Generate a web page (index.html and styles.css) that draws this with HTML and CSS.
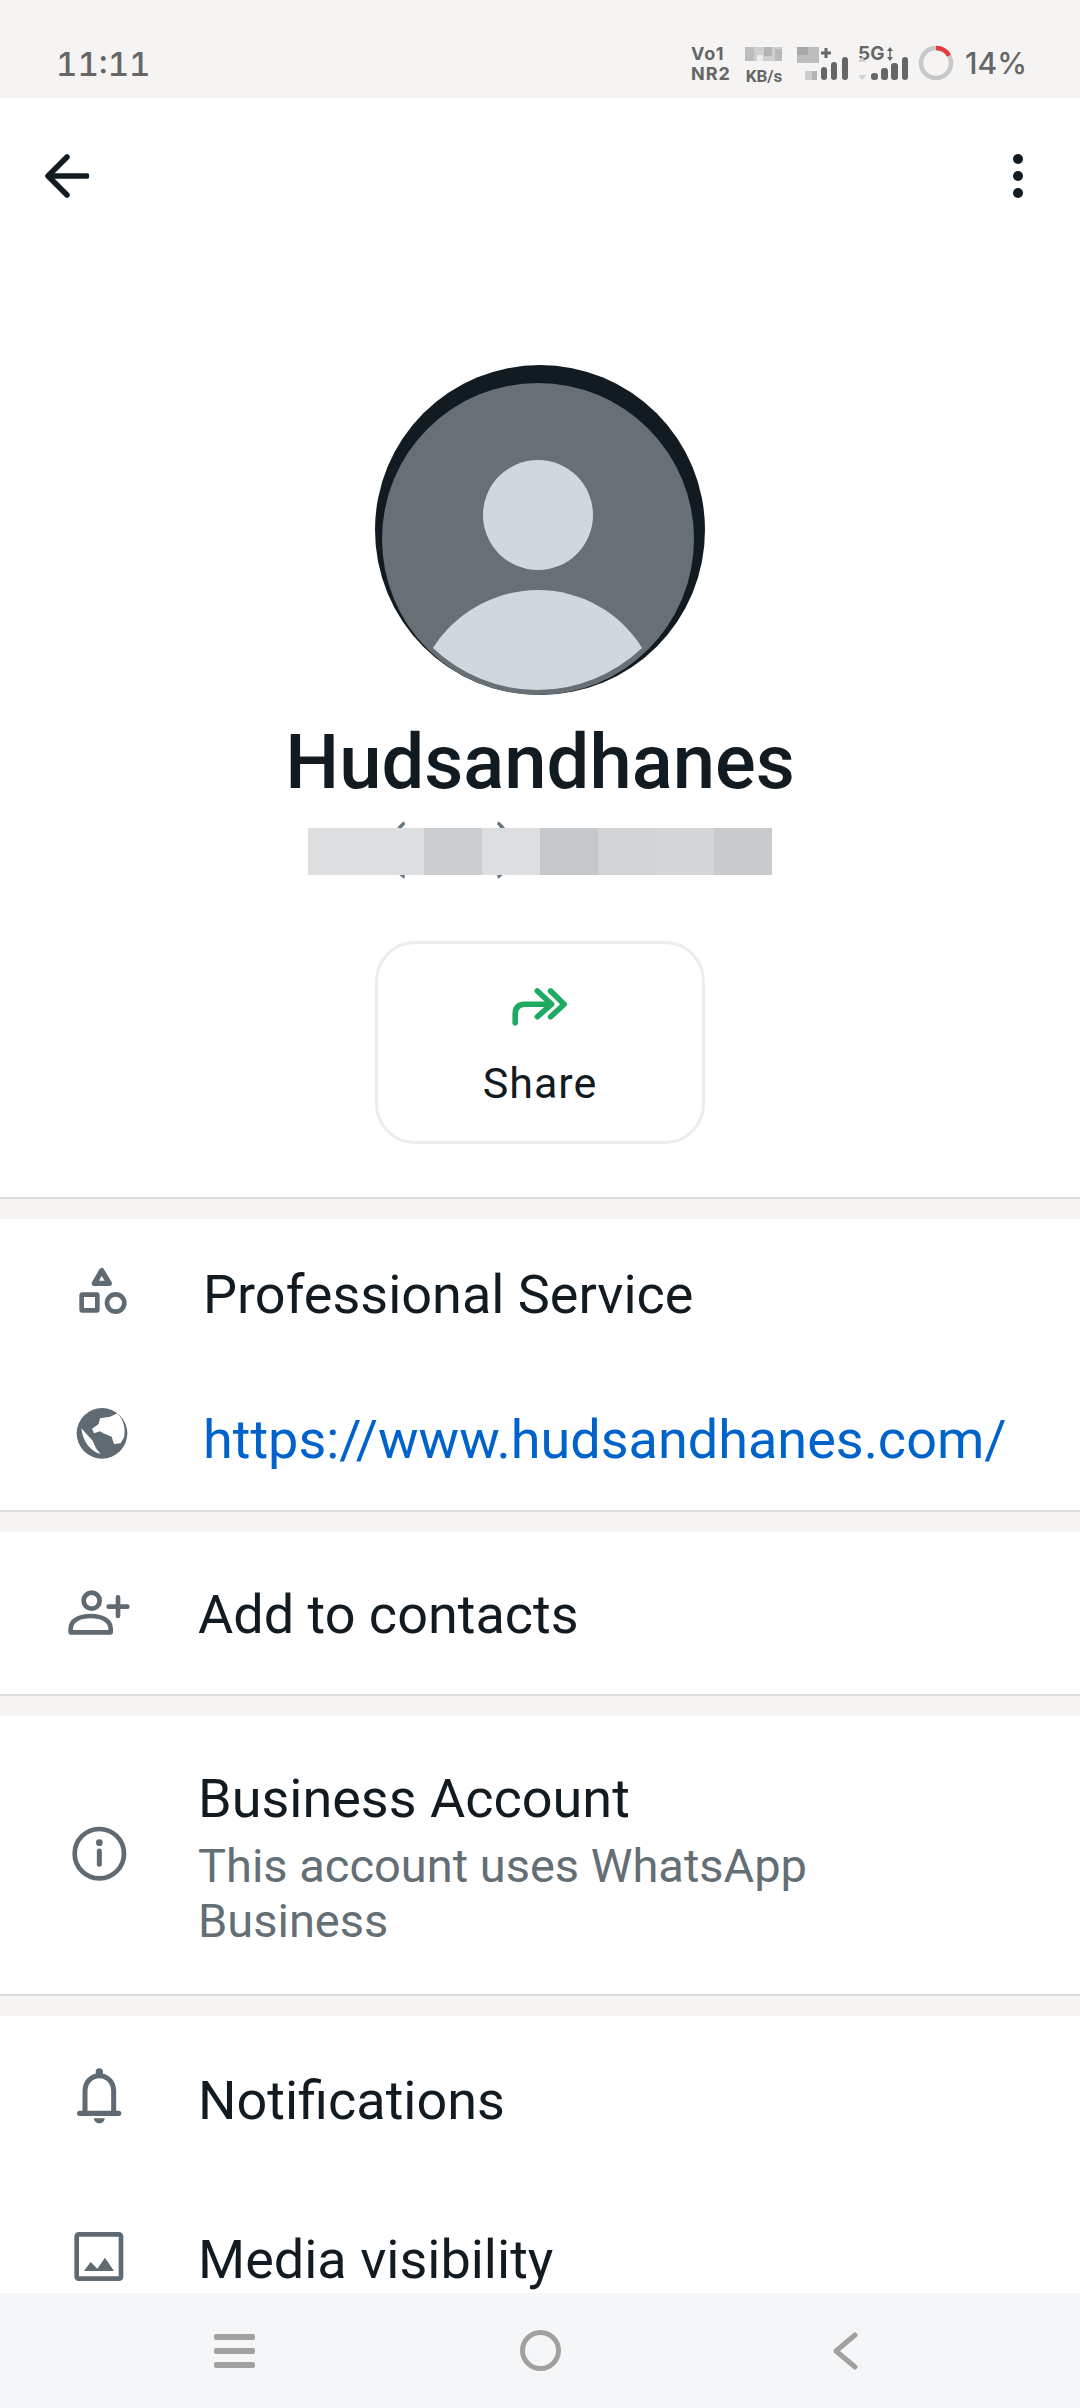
FILE: index.html
```html
<!DOCTYPE html>
<html>
<head>
    <meta charset="UTF-8">
    <link rel="stylesheet" href="styles.css">
</head>
<body>
    <div class="phone">
        <div class="statusbar">
            <div class="clock">11:11</div>
            <div class="status-icons">
                <div class="net-type"><div>Vo1</div><div>NR2</div></div>
                <div class="net-speed">
                    <svg class="speed-blur" viewBox="0 0 37 14">
                        <rect width="37" height="14" fill="#cfcfcf"/>
                        <rect x="0" width="9" height="14" fill="#bdbdbd"/>
                        <rect x="12" y="8" width="6" height="6" fill="#eeeeee"/>
                        <rect x="19" width="8" height="9" fill="#b4b4b4"/>
                        <rect x="30" y="2" width="7" height="12" fill="#b9b9b9"/>
                    </svg>
                    <div>KB/s</div>
                </div>
                <svg class="signal sim1" viewBox="0 0 52 34">
                    <rect x="0" width="22" height="16" fill="#bdbdbd"/>
                    <rect x="0" width="11" height="8" fill="#a8a8a8"/>
                    <path d="M24 6h10M29 1v10" stroke="#666" stroke-width="3"/>
                    <rect x="8" y="24" width="7" height="9" fill="#cdcdcd"/>
                    <rect x="15" y="24" width="5" height="9" fill="#b5b5b5"/>
                    <rect x="24" y="20" width="6" height="13" rx="3" fill="#666"/>
                    <rect x="34" y="15" width="6" height="18" rx="3" fill="#666"/>
                    <rect x="45" y="10" width="6" height="23" rx="3" fill="#666"/>
                </svg>
                <div class="sim2">
                    <div class="sim2-label">5G<svg class="updown" viewBox="0 0 8 14"><path d="M4 0l3 4H1zM4 14l3-4H1z" fill="#666"/><path d="M4 3v8" stroke="#666" stroke-width="1.5"/></svg></div>
                    <svg class="signal sim2-bars" viewBox="0 0 50 23">
                        <path d="M4 0l4 5H0zM4 23l4-5H0z" fill="#d2d2d2"/>
                        <rect x="13" y="16" width="7" height="7" rx="3" fill="#666"/>
                        <rect x="23" y="11" width="7" height="12" rx="3" fill="#666"/>
                        <rect x="33" y="6" width="7" height="17" rx="3" fill="#666"/>
                        <rect x="44" y="0" width="6" height="23" rx="3" fill="#666"/>
                    </svg>
                </div>
                <svg class="battery-ring" viewBox="0 0 36 36">
                    <circle cx="18" cy="18" r="15" fill="none" stroke="#c8c8c8" stroke-width="4.5"/>
                    <path d="M18 3A15 15 0 0 1 31 10.5" fill="none" stroke="#e5383f" stroke-width="4.5"/>
                </svg>
                <div class="battery-text">14%</div>
            </div>
        </div>

        <div class="content">
            <div class="toolbar">
                <svg class="back-icon" viewBox="0 0 44 44"><path d="M42 22H5M22 3L3 22l19 19" fill="none" stroke="#111b21" stroke-width="5.5" stroke-linecap="round" stroke-linejoin="round"/></svg>
                <svg class="more-icon" viewBox="0 0 12 46"><circle cx="6" cy="6" r="5" fill="#111b21"/><circle cx="6" cy="23" r="5" fill="#111b21"/><circle cx="6" cy="40" r="5" fill="#111b21"/></svg>
            </div>

            <div class="profile card">
                <svg class="avatar" viewBox="0 0 330 330">
                    <circle cx="165" cy="165" r="165" fill="#111b21"/>
                    <circle cx="163" cy="174" r="156" fill="#687076"/>
                    <circle cx="163" cy="150" r="55" fill="#d1d7db"/>
                    <path d="M58 283C80 248 120 225 163 225C206 225 246 248 267 283A151 151 0 0 1 58 283Z" fill="#d1d7db"/>
                </svg>
                <div class="name">Hudsandhanes</div>
                <div class="phone-line">
                    <span class="paren-left">(</span><span class="paren-right">)</span>
                    <div class="phone-blur">
                        <div class="cell cell-wide c1"></div>
                        <div class="cell c2"></div>
                        <div class="cell c1"></div>
                        <div class="cell c3"></div>
                        <div class="cell c4"></div>
                        <div class="cell c5"></div>
                        <div class="cell c6"></div>
                    </div>
                </div>
                <div class="share-btn">
                    <svg class="share-icon" viewBox="690 795 180 130">
                        <path d="M705 906V880Q705 850 735 850H815M772 810L815 850L772 888M812 810L853 850L812 888" fill="none" stroke="#1daa61" stroke-width="17" stroke-linecap="round" stroke-linejoin="round"/>
                    </svg>
                    <div class="share-label">Share</div>
                </div>
            </div>

            <div class="card section-info">
                <div class="row row-info">
                    <svg class="row-icon" viewBox="0 0 240 240">
                        <path d="M125 47L103 85H148Z" fill="none" stroke="#5f6a72" stroke-width="16" stroke-linejoin="round"/>
                        <rect x="65" y="119" width="47" height="47" rx="2" fill="none" stroke="#5f6a72" stroke-width="14"/>
                        <circle cx="167" cy="144" r="26" fill="none" stroke="#5f6a72" stroke-width="14"/>
                    </svg>
                    <div class="row-text row-text-shift">Professional Service</div>
                </div>
                <div class="row row-info row-link-row">
                    <svg class="row-icon" viewBox="-30 0 240 240">
                        <circle cx="96" cy="100" r="76" fill="#5f6a72"/>
                        <path d="M34 85L68 122L78 145L92 162C62 155 38 125 34 85Z" fill="#fff"/>
                        <path d="M66 86L86 72L90 55L120 50L142 40C160 58 168 85 162 112L152 130L132 132L125 110L100 100L90 94L72 100Z" fill="#fff"/>
                    </svg>
                    <div class="row-text row-link row-text-shift">https://www.hudsandhanes.com/</div>
                </div>
            </div>

            <div class="card section-add">
                <div class="row">
                    <svg class="row-icon" viewBox="0 0 240 240">
                        <circle cx="95" cy="77" r="24" fill="none" stroke="#5f6a72" stroke-width="14"/>
                        <path d="M32 172H152V161C152 136 125 123 92 123C59 123 32 136 32 161Z" fill="none" stroke="#5f6a72" stroke-width="14" stroke-linejoin="round"/>
                        <path d="M146 95H202M174 67V123" fill="none" stroke="#5f6a72" stroke-width="14" stroke-linecap="round"/>
                    </svg>
                    <div class="row-text">Add to contacts</div>
                </div>
            </div>

            <div class="card section-biz">
                <div class="row">
                    <svg class="row-icon" viewBox="0 0 240 240">
                        <circle cx="118" cy="116" r="74" fill="none" stroke="#5f6a72" stroke-width="14"/>
                        <circle cx="118" cy="83" r="10" fill="#5f6a72"/>
                        <path d="M118 108V148" stroke="#5f6a72" stroke-width="15" stroke-linecap="round"/>
                    </svg>
                    <div class="biz-text">
                        <div class="row-text">Business Account</div>
                        <div class="row-sub">This account uses WhatsApp<br>Business</div>
                    </div>
                </div>
            </div>

            <div class="card section-more">
                <div class="row row-notif">
                    <svg class="row-icon" viewBox="0 0 240 240">
                        <path d="M75 155V90C75 64 94 44 118 44C142 44 161 64 161 90V155" fill="none" stroke="#5f6a72" stroke-width="15"/>
                        <path d="M59 157H176" stroke="#5f6a72" stroke-width="16" stroke-linecap="round"/>
                        <circle cx="118" cy="33" r="11" fill="#5f6a72"/>
                        <path d="M102 172H134C134 182 126 187 118 187C110 187 102 182 102 172Z" fill="#5f6a72"/>
                    </svg>
                    <div class="row-text">Notifications</div>
                </div>
                <div class="row row-media">
                    <svg class="row-icon" viewBox="0 0 240 240">
                        <rect x="50" y="43" width="133" height="133" rx="6" fill="none" stroke="#5f6a72" stroke-width="14"/>
                        <path d="M72 153L92 126L112 146L135 113L162 153Z" fill="#5f6a72"/>
                    </svg>
                    <div class="row-text">Media visibility</div>
                </div>
            </div>
        </div>

        <div class="navbar">
            <div class="nav-menu"><span></span><span></span><span></span></div>
            <div class="nav-home"></div>
            <svg class="nav-back" viewBox="0 0 26 38"><path d="M23 3L4 19l19 16" fill="none" stroke="#a0a0a0" stroke-width="5" stroke-linecap="round" stroke-linejoin="round"/></svg>
        </div>
    </div>
</body>
</html>
```

FILE: styles.css
```css
* {
    box-sizing: border-box;
}

html, body {
    margin: 0;
    padding: 0;
    background: #ffffff;
}

body {
    font-family: Roboto, "Noto Sans", sans-serif;
    color: #111b21;
}

.phone {
    width: 1080px;
    height: 2408px;
    display: flex;
    flex-direction: column;
    overflow: hidden;
    background: #f5f4f2;
}

/* status bar */
.statusbar {
    height: 98px;
    flex: none;
    display: flex;
    justify-content: space-between;
    align-items: flex-start;
    padding: 0 57px 0 56px;
    background: #f5f4f2;
    color: #666666;
}

.clock {
    margin-top: 44px;
    font-family: Inter, Roboto, sans-serif;
    font-size: 33px;
    line-height: 40px;
    font-weight: 500;
    font-variant-numeric: tabular-nums;
}

.status-icons {
    display: flex;
    align-items: flex-start;
    margin-top: 47px;
}

.net-type {
    width: 54px;
    margin-top: -3px;
    font-family: Inter, Roboto, sans-serif;
    font-size: 18px;
    line-height: 20px;
    letter-spacing: 1px;
    font-weight: 700;
}

.net-speed {
    width: 38px;
    font-size: 17px;
    line-height: 20px;
    font-weight: 700;
    text-align: center;
}

.speed-blur {
    display: block;
    width: 37px;
    height: 14px;
    margin-bottom: 5px;
}

.signal {
    display: block;
}

.sim1 {
    width: 52px;
    height: 34px;
    margin-left: 14px;
}

.sim2 {
    width: 50px;
    margin-left: 9px;
}

.sim2-label {
    display: flex;
    align-items: center;
    font-family: Inter, Roboto, sans-serif;
    font-size: 19px;
    line-height: 14px;
    font-weight: 700;
    gap: 2px;
}

.updown {
    width: 8px;
    height: 14px;
}

.sim2-bars {
    width: 50px;
    height: 23px;
    margin-top: -4px;
}

.battery-ring {
    width: 36px;
    height: 36px;
    margin-left: 10px;
    margin-top: -2px;
}

.battery-text {
    width: 58px;
    margin-left: 11px;
    font-family: Inter, Roboto, sans-serif;
    font-size: 30px;
    line-height: 32px;
    font-weight: 500;
    white-space: nowrap;
}

/* scrolling content */
.content {
    flex: 1;
    min-height: 0;
    overflow: hidden;
}

.toolbar {
    height: 156px;
    display: flex;
    justify-content: space-between;
    align-items: center;
    padding: 0 56px 0 45px;
    background: #ffffff;
}

.back-icon {
    width: 44px;
    height: 44px;
}

.more-icon {
    width: 12px;
    height: 46px;
}

.card {
    background: #ffffff;
    border-bottom: 2px solid #dcdcdc;
    margin-bottom: 20px;
}

.profile {
    display: flex;
    flex-direction: column;
    align-items: center;
    height: 945px;
    padding-top: 111px;
}

.avatar {
    display: block;
    width: 330px;
    height: 330px;
    flex: none;
}

.name {
    margin-top: 22px;
    font-size: 76px;
    line-height: 90px;
    font-weight: 500;
    color: #111b21;
}

.phone-line {
    position: relative;
    width: 464px;
    height: 56px;
    margin-top: 16px;
    font-size: 56px;
    line-height: 56px;
    color: #667781;
}

.paren-left {
    position: absolute;
    left: 79px;
    top: -4px;
}

.paren-right {
    position: absolute;
    left: 188px;
    top: -4px;
}

.phone-blur {
    position: absolute;
    left: 0;
    top: 5px;
    width: 464px;
    height: 47px;
    display: flex;
}

.cell {
    width: 58px;
    height: 47px;
}

.cell-wide {
    width: 116px;
}

.c1 { background: #dcdee0; }
.c2 { background: #caced0; }
.c3 { background: #c4c8ca; }
.c4 { background: #d2d4d6; }
.c5 { background: #d4d6d8; }
.c6 { background: #c8cacc; }

.share-btn {
    width: 330px;
    height: 203px;
    margin-top: 62px;
    border: 3px solid #e9edef;
    border-radius: 40px;
    display: flex;
    flex-direction: column;
    align-items: center;
    padding-top: 42px;
}

.share-icon {
    display: block;
    width: 60px;
    height: 43px;
}

.share-label {
    margin-top: 29px;
    font-size: 43px;
    line-height: 50px;
    letter-spacing: 1px;
    color: #111b21;
}

.row {
    display: flex;
    align-items: center;
    padding-left: 60px;
}

.row-icon {
    display: block;
    flex: none;
    width: 80px;
    height: 80px;
    margin-right: 58px;
}

.row-text {
    font-size: 54px;
    line-height: 60px;
    color: #111b21;
}

.row-text-shift {
    margin-left: 5px;
}

.row-link {
    color: #0063cb;
}

.biz-text {
    padding-top: 7px;
}

.row-sub {
    margin-top: 9px;
    font-size: 47px;
    line-height: 55px;
    color: #636e75;
}

.section-info {
    height: 293px;
    padding-top: 4px;
}

.row-info {
    height: 143px;
}

.row-link-row {
    margin-top: 2px;
}

.section-add {
    height: 164px;
    padding-top: 3px;
}

.section-add .row {
    height: 159px;
}

.section-biz {
    height: 280px;
}

.section-biz .row {
    height: 278px;
}

.section-more {
    margin-bottom: 0;
    border-bottom: 0;
    height: 320px;
}

.row-notif {
    height: 169px;
}

.row-media {
    height: 150px;
}

/* nav bar */
.navbar {
    height: 115px;
    flex: none;
    display: flex;
    align-items: center;
    padding-left: 214px;
    background: #f5f6f8;
}

.nav-menu {
    width: 41px;
    margin-right: 265px;
    display: flex;
    flex-direction: column;
    gap: 8px;
}

.nav-menu span {
    display: block;
    height: 6px;
    border-radius: 2px;
    background: #a0a0a0;
}

.nav-home {
    width: 41px;
    height: 41px;
    margin-right: 271px;
    border: 5px solid #a0a0a0;
    border-radius: 50%;
}

.nav-back {
    width: 26px;
    height: 38px;
}
```
